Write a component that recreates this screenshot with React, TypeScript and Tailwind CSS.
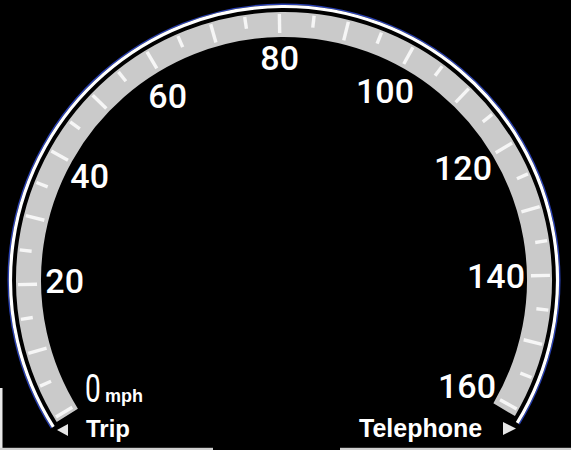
import React from 'react'

// ============================================
// GEOMETRY
// ============================================
const CX = 284
const CY = 280
const ROT = 1 // dial is turned a hair counter-clockwise

const rad = (deg: number) => (deg * Math.PI) / 180

function polar(r: number, deg: number): [number, number] {
  return [CX + r * Math.cos(rad(deg)), CY - r * Math.sin(rad(deg))]
}

function arc(r: number, from: number, to: number) {
  const [x0, y0] = polar(r, from)
  const [x1, y1] = polar(r, to)
  return `M ${x0.toFixed(2)} ${y0.toFixed(2)} A ${r} ${r} 0 1 1 ${x1.toFixed(2)} ${y1.toFixed(2)}`
}

const speedAngle = (v: number) => 210 - 1.5 * v + ROT

const TICKS = Array.from({ length: 33 }, (_, i) => i * 5)

// label right edge + baseline, read off the dial
const LABELS = [
  { v: '20', x: 84, y: 293 },
  { v: '40', x: 109, y: 188 },
  { v: '60', x: 187, y: 108 },
  { v: '80', x: 299, y: 70 },
  { v: '100', x: 414, y: 103 },
  { v: '120', x: 492, y: 180 },
  { v: '140', x: 525, y: 288 },
  { v: '160', x: 496, y: 398 },
]

const NUM_FONT = "Roboto, 'Liberation Sans', Arial, sans-serif"
const LABEL_FONT = "'Liberation Sans', Arial, sans-serif"

// ============================================
// SPEEDOMETER
// ============================================
function Speedometer() {
  return (
    <svg width={571} height={450} viewBox="0 0 571 450" className="block">
      {/* outer rim */}
      <path d={arc(275.8, 212.5, -31.5)} fill="none" stroke="#3b5bff" strokeWidth={1.4} opacity={0.7} />
      <path d={arc(273.5, 212.5, -31.5)} fill="none" stroke="#ffffff" strokeWidth={3.2} />

      {/* grey band */}
      <path d={arc(255.5, 212, -30.5)} fill="none" stroke="#cacaca" strokeWidth={25} />

      {/* ticks */}
      {TICKS.map(v => {
        const a = speedAngle(v)
        const [x1, y1] = polar(v % 10 === 0 ? 247 : 254, a)
        const [x2, y2] = polar(266, a)
        return (
          <line
            key={v}
            x1={x1}
            y1={y1}
            x2={x2}
            y2={y2}
            stroke="#f6f6f6"
            strokeWidth={3.4}
          />
        )
      })}

      {/* numbers */}
      {LABELS.map(l => (
        <text
          key={l.v}
          x={l.x}
          y={l.y}
          textAnchor="end"
          fill="#ffffff"
          fontFamily={NUM_FONT}
          fontWeight={500}
          fontSize={34}
        >
          {l.v}
        </text>
      ))}

      {/* current speed */}
      <text
        transform="translate(85 402) scale(0.74 1)"
        x={0}
        y={0}
        fill="#ffffff"
        fontFamily={NUM_FONT}
        fontWeight={400}
        fontSize={38}
      >
        0
      </text>
      <text x={105} y={402} fill="#ffffff" fontFamily={LABEL_FONT} fontWeight={700} fontSize={18}>
        mph
      </text>

      {/* menu row */}
      <polygon points="57,430 68,424 68,436" fill="#e6e6e6" />
      <text x={86} y={437} fill="#ffffff" fontFamily={LABEL_FONT} fontWeight={700} fontSize={24}>
        Trip
      </text>
      <text x={359} y={437} fill="#ffffff" fontFamily={LABEL_FONT} fontWeight={700} fontSize={25}>
        Telephone
      </text>
      <polygon points="503,422 503,435 516,428.5" fill="#e6e6e6" />

      {/* scan edges */}
      <rect x={0} y={388} width={2.5} height={62} fill="#e8e8e8" />
      <rect x={0} y={447.8} width={213} height={2.2} fill="#cfcfcf" />
      <rect x={340} y={447.8} width={231} height={2.2} fill="#cfcfcf" />
    </svg>
  )
}

export default function App() {
  return (
    <div className="w-[571px] h-[450px] bg-black overflow-hidden">
      <Speedometer />
    </div>
  )
}
